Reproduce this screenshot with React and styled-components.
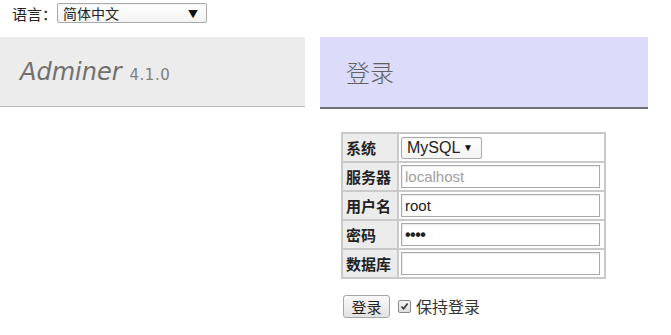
import styled, { createGlobalStyle } from 'styled-components';

const GlobalStyle = createGlobalStyle`
  body {
    margin: 0;
    background: #fff;
    font-family: "Liberation Sans", "Noto Sans CJK SC", sans-serif;
    color: #222;
  }
`;

const Page = styled.div`
  width: 671px;
  height: 335px;
  overflow: hidden;
  background: #fff;
`;

const LangBar = styled.div`
  display: flex;
  align-items: center;
  height: 37px;
  padding: 0 0 11px 12px;
  box-sizing: border-box;
  font-family: "Noto Sans CJK SC", sans-serif;
  font-size: 15px;
  color: #222;
`;

const FakeSelect = styled.div`
  display: flex;
  align-items: center;
  justify-content: space-between;
  box-sizing: border-box;
  width: ${p => p.$w}px;
  height: ${p => p.$h}px;
  padding: 0 8px 0 5px;
  border: 1px solid #a9a9a9;
  border-radius: 2px;
  background: linear-gradient(#fff, #f3f3f3);
  box-shadow: inset 0 1px 1px rgba(0, 0, 0, 0.06);
  font-family: ${p => p.$latin ? '"Liberation Sans", sans-serif' : '"Noto Sans CJK SC", sans-serif'};
  font-size: ${p => p.$fs}px;
  color: #222;
`;

const Arrow = styled.span`
  font-size: 10px;
  color: #111;
`;

const Headers = styled.div`
  display: flex;
  gap: 15px;
  align-items: flex-start;
`;

const Brand = styled.div`
  width: 305px;
  height: 70px;
  box-sizing: border-box;
  display: flex;
  align-items: baseline;
  padding: 0 0 0 20px;
  line-height: 70px;
  background: #ececec;
  border-bottom: 1px solid #b4b4b4;
  font-family: "DejaVu Sans", Verdana, sans-serif;
`;

const BrandName = styled.span`
  font-style: italic;
  font-size: 24px;
  color: #707070;
`;

const Version = styled.span`
  margin-left: 8px;
  font-size: 15px;
  letter-spacing: 0.5px;
  color: #808080;
`;

const Column = styled.div`
  display: flex;
  flex-direction: column;
`;

const Title = styled.h2`
  margin: 0;
  width: 328px;
  height: 72px;
  box-sizing: border-box;
  padding: 0 0 0 26px;
  line-height: 70px;
  background: #dcdcfa;
  border-bottom: 2px solid #6f6f7a;
  font-family: "Noto Sans CJK SC", serif;
  font-weight: 300;
  font-size: 24px;
  color: #616161;
`;

const Form = styled.div`
  padding: 23px 0 0 21px;
`;

const Table = styled.table`
  border-collapse: collapse;
  width: 265px;
  border: 2px solid #c9c9c9;
`;

const Th = styled.th`
  width: 50px;
  height: 27px;
  padding: 0 1px 0 3px;
  text-align: left;
  background: #ececec;
  border: 2px solid #c9c9c9;
  font-family: "Noto Sans CJK SC", sans-serif;
  font-weight: 700;
  font-size: 15px;
  color: #222;
  white-space: nowrap;
`;

const Td = styled.td`
  padding: 2px 4px 2px 2px;
  border: 2px solid #c9c9c9;
  background: #fff;
`;

const Field = styled.div`
  box-sizing: border-box;
  height: 23px;
  padding: 0 3px;
  display: flex;
  align-items: center;
  border: 1px solid #a9a9a9;
  box-shadow: inset 1px 1px 1px rgba(0, 0, 0, 0.08);
  font-family: "Liberation Sans", sans-serif;
  font-size: ${p => p.$dots ? 16 : 15}px;
  font-weight: ${p => p.$dots ? 700 : 400};
  letter-spacing: ${p => p.$dots ? '-0.5px' : '0'};
  color: ${p => p.$muted ? '#a0a0a0' : '#222'};
`;

const Actions = styled.div`
  display: flex;
  align-items: center;
  gap: 8px;
  padding: 15px 0 0 2px;
`;

const Button = styled.button`
  box-sizing: border-box;
  width: 47px;
  height: 23px;
  padding: 0;
  border: 1px solid #a5a5a5;
  border-radius: 3px;
  background: linear-gradient(#fafafa, #e2e2e2);
  font-family: "Noto Sans CJK SC", sans-serif;
  font-size: 15px;
  color: #222;
`;

const Check = styled.label`
  display: flex;
  align-items: center;
  gap: 5px;
  font-family: "Noto Sans CJK SC", sans-serif;
  font-size: 16px;
  color: #333;
`;

const Box = styled.span`
  width: 11px;
  height: 11px;
  border: 1px solid #8a8a8a;
  border-radius: 2px;
  background: linear-gradient(#f4f4f4, #dedede);
  display: flex;
  align-items: center;
  justify-content: center;
`;

const rows = [
  { label: '服务器', value: 'localhost', muted: true },
  { label: '用户名', value: 'root' },
  { label: '密码', value: '••••', dots: true },
  { label: '数据库', value: '' },
];

export default function App() {
  return (
    <Page>
      <GlobalStyle />
      <LangBar>
        语言：
        <FakeSelect $w={150} $h={20} $fs={14}>
          简体中文
          <Arrow>▼</Arrow>
        </FakeSelect>
      </LangBar>
      <Headers>
        <Brand>
          <BrandName>Adminer</BrandName>
          <Version>4.1.0</Version>
        </Brand>
        <Column>
          <Title>登录</Title>
          <Form>
            <Table>
              <tbody>
                <tr>
                  <Th>系统</Th>
                  <Td>
                    <FakeSelect $w={81} $h={22} $fs={16} $latin>
                      MySQL
                      <Arrow>▼</Arrow>
                    </FakeSelect>
                  </Td>
                </tr>
                {rows.map(r => (
                  <tr key={r.label}>
                    <Th>{r.label}</Th>
                    <Td>
                      <Field $muted={r.muted} $dots={r.dots}>{r.value}</Field>
                    </Td>
                  </tr>
                ))}
              </tbody>
            </Table>
            <Actions>
              <Button>登录</Button>
              <Check>
                <Box>
                  <svg width="9" height="9" viewBox="0 0 9 9">
                    <path d="M1.5 4.5 L3.6 6.8 L7.6 1.6" fill="none" stroke="#333" strokeWidth="1.6" />
                  </svg>
                </Box>
                保持登录
              </Check>
            </Actions>
          </Form>
        </Column>
      </Headers>
    </Page>
  );
}
